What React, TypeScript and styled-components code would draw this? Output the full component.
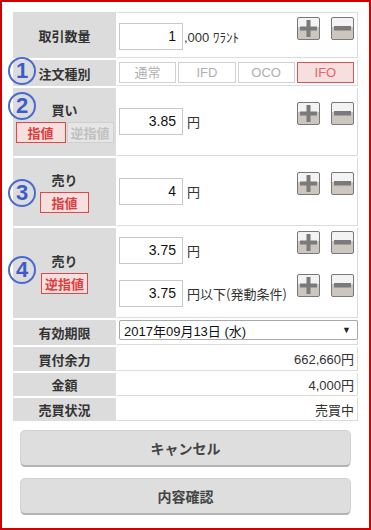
import React from "react";
import styled, { createGlobalStyle } from "styled-components";

const Global = createGlobalStyle`
  html, body { margin: 0; padding: 0; background: #fff; }
  body { font-family: "Liberation Sans", "Noto Sans CJK JP", sans-serif; color: #333; }
  * { box-sizing: border-box; }
`;

const Frame = styled.div`
  width: 371px;
  height: 530px;
  border: 2px solid #d40000;
  padding: 10px 11px 0 11px;
`;

const Table = styled.div`
  display: flex;
  flex-direction: column;
  row-gap: 2px;
  width: 345px;
`;

const Row = styled.div<{ $h: number }>`
  display: grid;
  grid-template-columns: 103px 1fr;
  column-gap: 1px;
  height: ${(p) => p.$h}px;
`;

const Label = styled.div`
  position: relative;
  background: #dcdcdc;
  display: flex;
  flex-direction: column;
  align-items: center;
  justify-content: center;
  font-weight: bold;
  font-size: 13px;
  color: #333;
  font-family: "Noto Sans CJK JP", sans-serif;
  line-height: 17px;
`;

const Value = styled.div<{ $first?: boolean; $pt?: number; $align?: string }>`
  border-bottom: 1px solid #dcdcdc;
  border-right: 1px solid #dcdcdc;
  ${(p) => (p.$first ? "border-top: 1px solid #dcdcdc;" : "")}
  padding: ${(p) => p.$pt ?? 0}px 2px 0 2px;
  display: flex;
  flex-direction: column;
  justify-content: ${(p) => p.$align ?? "flex-start"};
  row-gap: 10px;
`;

const Line = styled.div`
  display: flex;
  align-items: flex-start;
`;

const InputGroup = styled.div`
  display: flex;
  align-items: center;
  margin-top: 6px;
  column-gap: 4px;
`;

const NumInput = styled.div`
  width: 64px;
  height: 27px;
  border: 1px solid #c8c8c8;
  background: #fff;
  text-align: right;
  padding-right: 6px;
  font-size: 14px;
  line-height: 25px;
  color: #111;
`;

const Unit = styled.span`
  font-size: 13px;
  color: #333;
  font-family: "Noto Sans CJK JP", sans-serif;
  white-space: nowrap;
`;

const Suffix = styled.span`
  font-size: 13px;
  color: #333;
  margin-left: -3px;
  font-family: "Liberation Sans", "Noto Sans CJK JP", sans-serif;
`;

const Steppers = styled.div`
  margin-left: auto;
  display: flex;
  column-gap: 11px;
  padding-right: 1px;
`;

const StepBtn = styled.div`
  width: 23px;
  height: 23px;
  border: 1px solid #787878;
  border-radius: 2px;
  background: linear-gradient(#f3f3f3 0%, #f3f3f3 45%, #cdc6be 45%, #cdc6be 100%);
  display: flex;
  align-items: center;
  justify-content: center;
`;

const Badge = styled.div<{ $top: number }>`
  position: absolute;
  left: -5px;
  top: ${(p) => p.$top}px;
  width: 28px;
  height: 28px;
  border-radius: 50%;
  border: 2px solid #4a6ad0;
  color: #3c5cc8;
  font-weight: bold;
  font-size: 22px;
  line-height: 24px;
  text-align: center;
  font-family: "Liberation Sans", sans-serif;
`;

const TagRow = styled.div`
  display: flex;
  column-gap: 1px;
  margin-top: 4px;
`;

const Tag = styled.div<{ $active?: boolean; $w: number }>`
  width: ${(p) => p.$w}px;
  height: 21px;
  border: 1px solid ${(p) => (p.$active ? "#e04848" : "#cfcfcf")};
  background: ${(p) => (p.$active ? "#f5dfdf" : "#e6e6e6")};
  color: ${(p) => (p.$active ? "#e03c3c" : "#c0c0c0")};
  font-size: 13px;
  font-weight: bold;
  line-height: 19px;
  text-align: center;
`;

const Segments = styled.div`
  display: flex;
  column-gap: 2px;
  padding-right: 1px;
`;

const Seg = styled.div<{ $active?: boolean }>`
  flex: 1;
  height: 21px;
  border: 1px solid ${(p) => (p.$active ? "#e05050" : "#d0d0d0")};
  background: ${(p) => (p.$active ? "#f5dfdf" : "#fff")};
  color: ${(p) => (p.$active ? "#e06868" : "#b0b0b0")};
  font-size: 13px;
  line-height: 19px;
  text-align: center;
  font-family: "Liberation Sans", "Noto Sans CJK JP", sans-serif;
`;

const Select = styled.div`
  height: 20px;
  margin-right: -3px;
  border: 1px solid #a8a8a8;
  border-radius: 2px;
  background: #fff;
  display: flex;
  align-items: center;
  justify-content: space-between;
  padding: 0 6px 0 4px;
  font-size: 13px;
  color: #111;
  font-family: "Liberation Sans", "Noto Sans CJK JP", sans-serif;
`;

const Arrow = styled.span`
  font-size: 9px;
  color: #222;
`;

const InfoValue = styled.div`
  text-align: right;
  padding-right: 1px;
  font-size: 13px;
  color: #333;
  font-family: "Liberation Sans", "Noto Sans CJK JP", sans-serif;
`;

const Actions = styled.div`
  display: flex;
  flex-direction: column;
  row-gap: 14px;
  padding: 10px 0 0 8px;
`;

const ActionBtn = styled.div`
  width: 329px;
  height: 34px;
  background: #dedede;
  border-radius: 4px;
  box-shadow: 0 2px 0 #b4b4b4, 0 0 0 1px #d2d2d2;
  display: flex;
  align-items: center;
  justify-content: center;
  font-size: 14px;
  font-weight: bold;
  color: #444;
  font-family: "Noto Sans CJK JP", sans-serif;
`;

const Plus = () => (
  <StepBtn>
    <svg width="17" height="17" viewBox="0 0 17 17">
      <rect x="0" y="6.5" width="17" height="4" fill="#7a7a7a" />
      <rect x="6.5" y="0" width="4" height="17" fill="#7a7a7a" />
    </svg>
  </StepBtn>
);

const Minus = () => (
  <StepBtn>
    <svg width="17" height="17" viewBox="0 0 17 17">
      <rect x="0" y="6" width="17" height="4.5" fill="#7a7a7a" />
    </svg>
  </StepBtn>
);

const Stepper = () => (
  <Steppers>
    <Plus />
    <Minus />
  </Steppers>
);

const PriceLine = ({ value, unit }: { value: string; unit: string }) => (
  <Line>
    <InputGroup>
      <NumInput>{value}</NumInput>
      <Unit>{unit}</Unit>
    </InputGroup>
    <Stepper />
  </Line>
);

export default function App() {
  return (
    <>
      <Global />
      <Frame>
        <Table>
          <Row $h={46}>
            <Label>取引数量</Label>
            <Value $first $pt={4}>
              <Line>
                <InputGroup>
                  <NumInput>1</NumInput>
                  <Suffix>,000 ﾜﾗﾝﾄ</Suffix>
                </InputGroup>
                <Stepper />
              </Line>
            </Value>
          </Row>
          <Row $h={26}>
            <Label>
              <Badge $top={-3}>1</Badge>
              注文種別
            </Label>
            <Value $align="center">
              <Segments>
                <Seg>通常</Seg>
                <Seg>IFD</Seg>
                <Seg>OCO</Seg>
                <Seg $active>IFO</Seg>
              </Segments>
            </Value>
          </Row>
          <Row $h={68}>
            <Label>
              <Badge $top={4}>2</Badge>
              <span>買い</span>
              <TagRow>
                <Tag $active $w={50}>指値</Tag>
                <Tag $w={47}>逆指値</Tag>
              </TagRow>
            </Label>
            <Value $pt={14}>
              <PriceLine value="3.85" unit="円" />
            </Value>
          </Row>
          <Row $h={68}>
            <Label>
              <Badge $top={21}>3</Badge>
              <span>売り</span>
              <TagRow>
                <Tag $active $w={49}>指値</Tag>
              </TagRow>
            </Label>
            <Value $pt={14}>
              <PriceLine value="4" unit="円" />
            </Value>
          </Row>
          <Row $h={90}>
            <Label>
              <Badge $top={28}>4</Badge>
              <span>売り</span>
              <TagRow>
                <Tag $active $w={47}>逆指値</Tag>
              </TagRow>
            </Label>
            <Value $pt={3}>
              <PriceLine value="3.75" unit="円" />
              <PriceLine value="3.75" unit="円以下(発動条件)" />
            </Value>
          </Row>
          <Row $h={25}>
            <Label>有効期限</Label>
            <Value $pt={0}>
              <Select>
                <span>2017年09月13日 (水)</span>
                <Arrow>▼</Arrow>
              </Select>
            </Value>
          </Row>
          <Row $h={24}>
            <Label>買付余力</Label>
            <Value $align="center">
              <InfoValue>662,660円</InfoValue>
            </Value>
          </Row>
          <Row $h={23}>
            <Label>金額</Label>
            <Value $align="center">
              <InfoValue>4,000円</InfoValue>
            </Value>
          </Row>
          <Row $h={23}>
            <Label>売買状況</Label>
            <Value $align="center">
              <InfoValue>売買中</InfoValue>
            </Value>
          </Row>
        </Table>
        <Actions>
          <ActionBtn>キャンセル</ActionBtn>
          <ActionBtn>内容確認</ActionBtn>
        </Actions>
      </Frame>
    </>
  );
}
